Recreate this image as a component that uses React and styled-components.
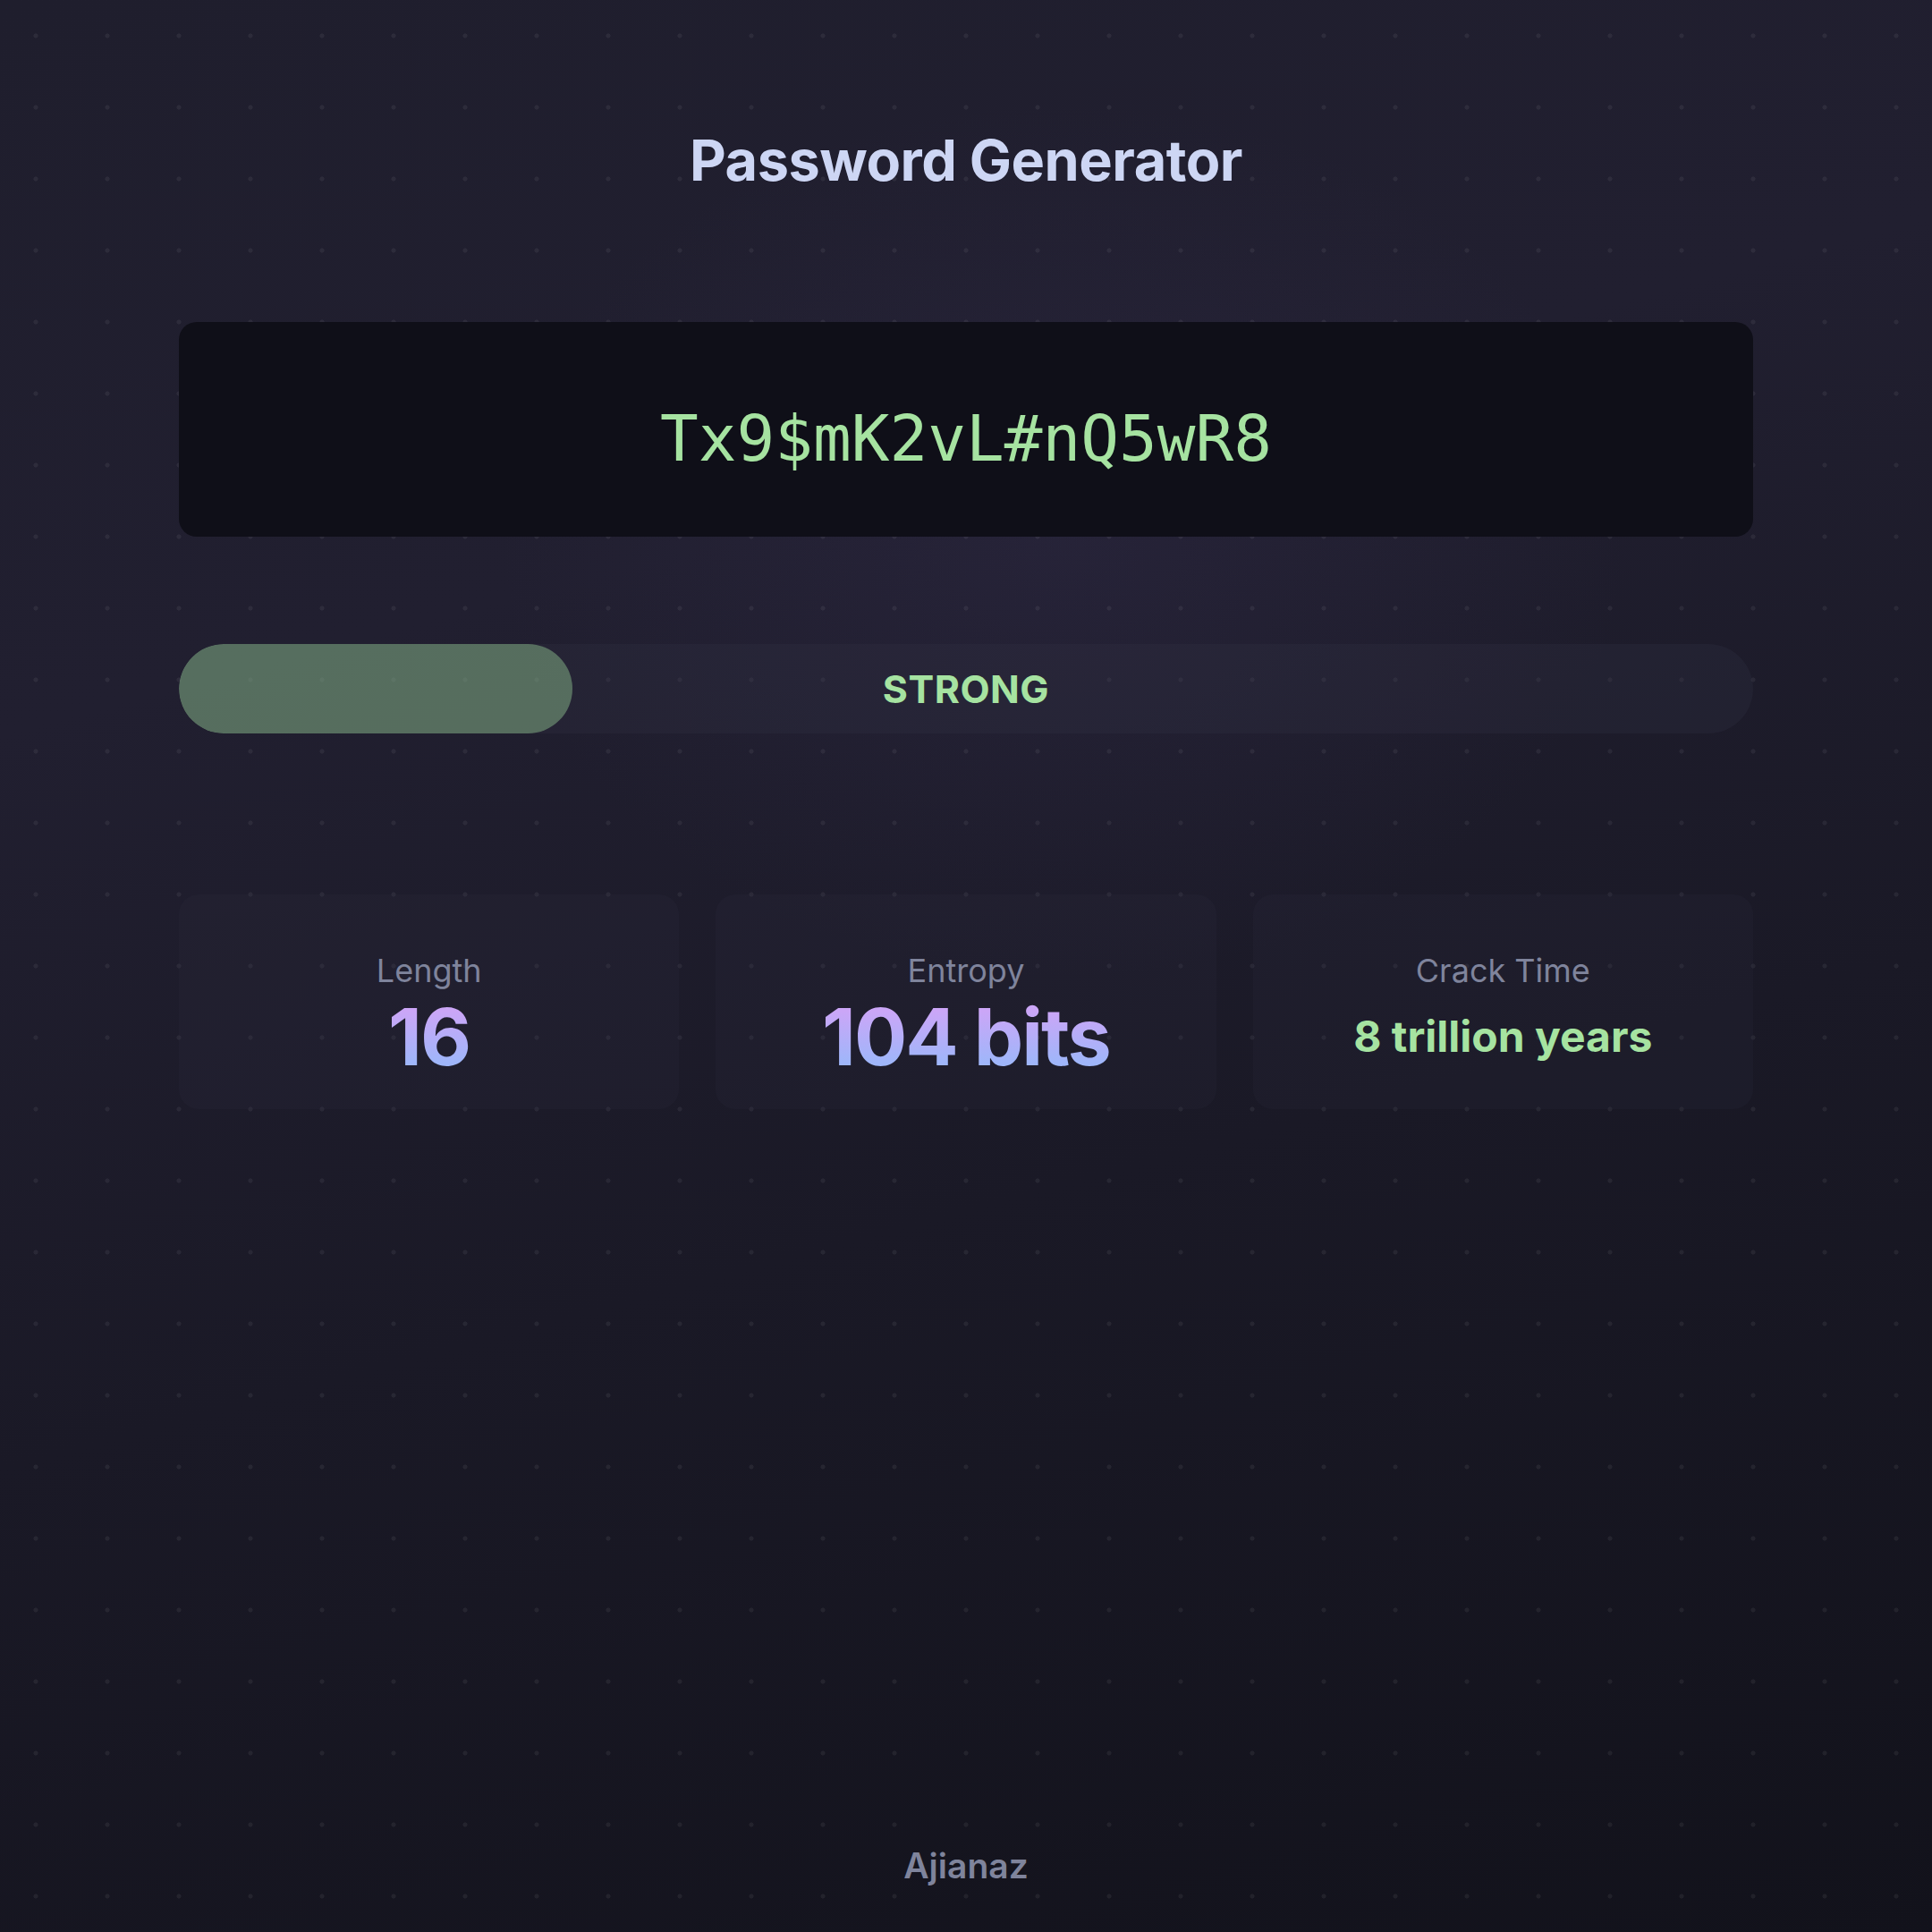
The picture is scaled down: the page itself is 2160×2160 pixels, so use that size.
import React from "react"
import styled, { createGlobalStyle } from "styled-components"

const GlobalStyle = createGlobalStyle`
    * {
        box-sizing: border-box;
    }

    html,
    body {
        margin: 0;
        padding: 0;
        background: #171622;
    }
`

const Page = styled.div`
    position: relative;
    min-height: 2160px;
    display: flex;
    flex-direction: column;
    align-items: center;
    padding: 142px 200px 50px;
    font-family: Inter, "Noto Sans", sans-serif;
    background:
        radial-gradient(circle at center, rgba(255, 255, 255, 0.06) 2.2px, transparent 2.9px) 0 0 / 80px 80px,
        radial-gradient(ellipse 900px 700px at 55% 28%, rgba(60, 52, 90, 0.22), transparent 70%),
        linear-gradient(165deg, #1f1e2d 0%, #211f30 30%, #1a1926 60%, #12121b 100%);
`

const Title = styled.h1`
    margin: 0;
    font-size: 63px;
    line-height: 74px;
    font-weight: 700;
    letter-spacing: -0.5px;
    color: #cdd6f4;
`

const PasswordBox = styled.div`
    width: 100%;
    height: 240px;
    margin-top: 144px;
    display: flex;
    align-items: center;
    justify-content: center;
    border-radius: 20px;
    background: #0f0f18;
`

const PasswordText = styled.span`
    font-family: "DejaVu Sans Mono", "Liberation Mono", monospace;
    font-size: 71px;
    color: #a6e3a1;
    padding-top: 20px;
`

const StrengthTrack = styled.div`
    position: relative;
    width: 100%;
    height: 100px;
    margin-top: 120px;
    border-radius: 50px;
    background: rgba(49, 50, 68, 0.28);
    overflow: hidden;
    display: flex;
    align-items: center;
    justify-content: center;
`

const StrengthFill = styled.div`
    position: absolute;
    left: 0;
    top: 0;
    bottom: 0;
    border-radius: 50px;
    background: rgba(166, 227, 161, 0.39);
`

const StrengthLabel = styled.span`
    position: relative;
    font-size: 43px;
    font-weight: 700;
    letter-spacing: 0.5px;
    color: #a6e3a1;
`

const StatsGrid = styled.div`
    width: 100%;
    margin-top: 180px;
    display: grid;
    grid-template-columns: repeat(3, 1fr);
    gap: 41px;
`

const StatCard = styled.div`
    height: 240px;
    padding-top: 30px;
    border-radius: 22px;
    background: rgba(49, 50, 68, 0.16);
    display: flex;
    flex-direction: column;
    align-items: center;
    justify-content: center;
    gap: 4px;
`

const StatLabel = styled.span`
    font-size: 36px;
    line-height: 44px;
    color: #7f849c;
`

const StatValue = styled.span`
    font-size: ${(p) => (p.$small ? "48px" : "88px")};
    line-height: 96px;
    font-weight: 700;
    letter-spacing: ${(p) => (p.$small ? "0" : "-2px")};
    color: ${(p) => (p.$green ? "#a6e3a1" : "transparent")};
    background: ${(p) =>
        p.$green ? "none" : "linear-gradient(180deg, #cba6f7 20%, #9fb6fa 80%)"};
    -webkit-background-clip: ${(p) => (p.$green ? "border-box" : "text")};
    background-clip: ${(p) => (p.$green ? "border-box" : "text")};
`

const Spacer = styled.div`
    flex: 1;
`

const Footer = styled.footer`
    font-size: 39px;
    line-height: 48px;
    font-weight: 600;
    color: #7f849c;
`

const stats = [
    { label: "Length", value: "16" },
    { label: "Entropy", value: "104 bits" },
    { label: "Crack Time", value: "8 trillion years", green: true },
]

const App = () => {
    const strength = 25

    return (
        <>
            <GlobalStyle />
            <Page>
                <Title>Password Generator</Title>
                <PasswordBox>
                    <PasswordText>Tx9$mK2vL#nQ5wR8</PasswordText>
                </PasswordBox>
                <StrengthTrack>
                    <StrengthFill style={{ width: `${strength}%` }} />
                    <StrengthLabel>STRONG</StrengthLabel>
                </StrengthTrack>
                <StatsGrid>
                    {stats.map((s) => (
                        <StatCard key={s.label}>
                            <StatLabel>{s.label}</StatLabel>
                            <StatValue $green={s.green} $small={s.green}>
                                {s.value}
                            </StatValue>
                        </StatCard>
                    ))}
                </StatsGrid>
                <Spacer />
                <Footer>Ajianaz</Footer>
            </Page>
        </>
    )
}

export default App
